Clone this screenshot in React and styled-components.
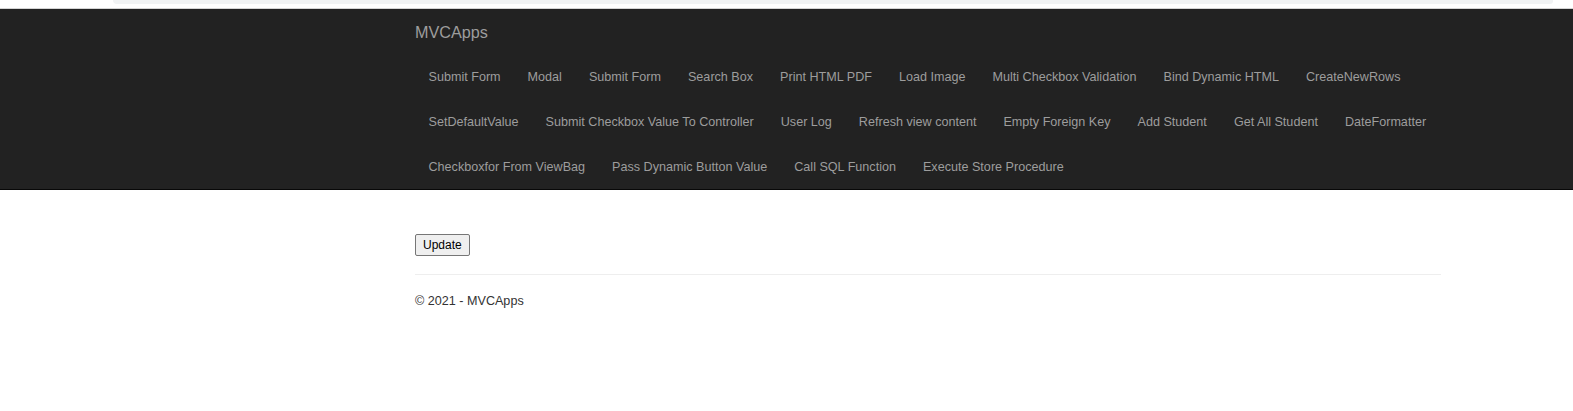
import React from "react";
import styled, { createGlobalStyle } from "styled-components";

const GlobalStyle = createGlobalStyle`
  html, body { margin: 0; padding: 0; background: #fff; }
  body {
    font-family: "Liberation Sans", Arial, sans-serif;
    font-size: 12.6px;
    line-height: 18px;
    color: #333;
  }
  * { box-sizing: border-box; }
`;

const TopStrip = styled.div`
  height: 9px;
  border-bottom: 1px solid #d4d4d4;
  background: #fff;
`;

const FindBar = styled.div`
  margin-left: 113px;
  width: 1440px;
  height: 4px;
  background: #f1f3f4;
  border-radius: 0 0 6px 8px;
`;

const Navbar = styled.nav`
  background: #222;
  border-bottom: 1px solid #080808;
`;

const Container = styled.div`
  margin-left: 415px;
  width: 1026px;
`;

const Brand = styled.a`
  display: block;
  height: 45px;
  padding: 13.5px 0;
  font-size: 16.2px;
  line-height: 18px;
  color: #9d9d9d;
  text-decoration: none;
`;

const NavList = styled.ul`
  list-style: none;
  margin: 0;
  padding: 0;
  display: flex;
  flex-wrap: wrap;
`;

const NavItem = styled.li`
  display: block;
`;

const NavLink = styled.a`
  display: block;
  padding: 13.5px 13.5px;
  line-height: 18px;
  font-size: 12.6px;
  color: #9d9d9d;
  text-decoration: none;
  white-space: nowrap;
`;

const Body = styled.main`
  padding-top: 44px;
`;

const UpdateButton = styled.button`
  display: block;
  margin: 0;
  font-family: "Liberation Sans", Arial, sans-serif;
  font-size: 12px;
  line-height: 14px;
  height: 22px;
  padding: 3px 7px;
  color: #000;
  background: #efefef;
  border: 1px solid #767676;
  border-radius: 2px;
`;

const Rule = styled.hr`
  margin: 18px 0 17px;
  border: 0;
  border-top: 1px solid #eee;
  height: 0;
`;

const Footer = styled.footer`
  p {
    margin: 0;
    font-size: 12.6px;
    line-height: 18px;
    color: #333;
  }
`;

const links = [
  "Submit Form",
  "Modal",
  "Submit Form",
  "Search Box",
  "Print HTML PDF",
  "Load Image",
  "Multi Checkbox Validation",
  "Bind Dynamic HTML",
  "CreateNewRows",
  "SetDefaultValue",
  "Submit Checkbox Value To Controller",
  "User Log",
  "Refresh view content",
  "Empty Foreign Key",
  "Add Student",
  "Get All Student",
  "DateFormatter",
  "Checkboxfor From ViewBag",
  "Pass Dynamic Button Value",
  "Call SQL Function",
  "Execute Store Procedure",
];

export default function App() {
  return (
    <>
      <GlobalStyle />
      <TopStrip>
        <FindBar />
      </TopStrip>
      <Navbar>
        <Container>
          <Brand href="#">MVCApps</Brand>
          <NavList>
            {links.map((l, i) => (
              <NavItem key={i}>
                <NavLink href="#">{l}</NavLink>
              </NavItem>
            ))}
          </NavList>
        </Container>
      </Navbar>
      <Container>
        <Body>
          <UpdateButton type="button">Update</UpdateButton>
          <Rule />
          <Footer>
            <p>© 2021 - MVCApps</p>
          </Footer>
        </Body>
      </Container>
    </>
  );
}
